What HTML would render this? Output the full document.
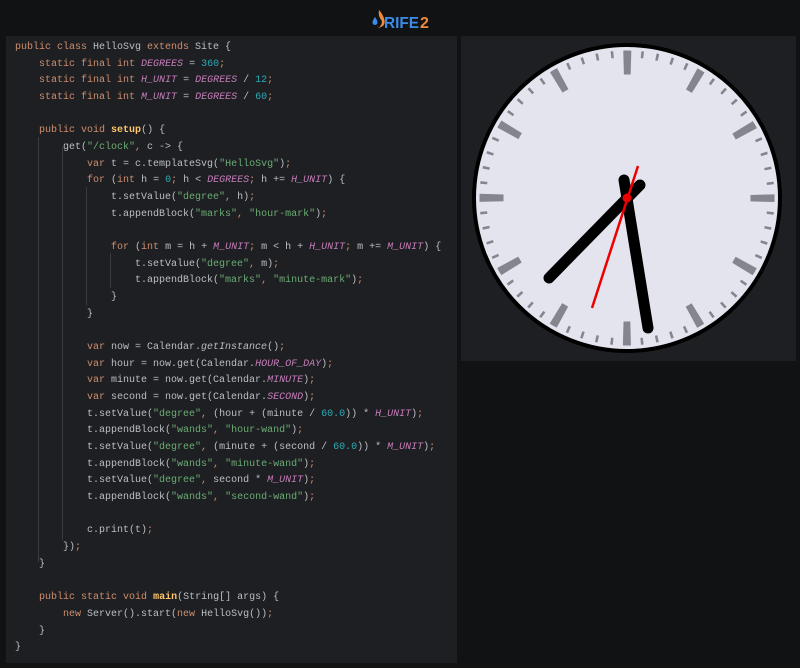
<!DOCTYPE html>
<html><head><meta charset="utf-8"><style>
body{margin:0;width:800px;height:668px;background:#111214;overflow:hidden;position:relative;font-family:"Liberation Sans",sans-serif}
.code{position:absolute;left:6px;top:36px;width:451px;height:627px;background:#1e1f22}
pre{margin:0;position:absolute;left:9px;top:4px;font-family:"Liberation Mono",monospace;font-size:10px;line-height:16.67px;color:#bcbec4}
.k{color:#cf8e6d}.i{color:#c77dbb;font-style:italic}.n{color:#2aacb8}.s{color:#6aab73}.m{color:#ffc66d;font-weight:bold}.it{font-style:italic}
.g{position:absolute;width:1px;background:#393b40}
.clock{position:absolute;left:461px;top:36px;width:335px;height:325px;background:#1e1f22}
.logo{position:absolute;left:372px;top:7px;height:24px}
</style></head><body>
<div class="logo"><svg width="70" height="24" viewBox="0 0 70 24">
<path d="M3 10 Q5.5 13.5 5.5 15.5 A2.5 2.5 0 0 1 0.5 15.5 Q0.5 13.5 3 10Z" fill="#3c8ce7"/>
<path d="M7 3 Q6 9 9 12.5 Q11.5 16 7 20.5 Q13.5 19.5 12.5 13.5 Q11.5 8 7 3Z M4.5 17 Q5.5 21.5 9 21.5 Q5.5 21 4.5 17Z" fill="#f08a3c"/>
<text x="12" y="21" font-family="Liberation Sans" font-weight="bold" font-size="16" fill="#3c8ce7" textLength="35" lengthAdjust="spacingAndGlyphs">RIFE</text>
<text x="48" y="21" font-family="Liberation Sans" font-weight="bold" font-size="16" fill="#f08a3c">2</text>
</svg></div>
<div class="code">
<div class="g" style="left:32px;top:101px;height:425px"></div>
<div class="g" style="left:56px;top:111px;height:393px"></div>
<div class="g" style="left:80px;top:151px;height:119px"></div>
<div class="g" style="left:104px;top:217px;height:35px"></div>
<pre><span class="k">public class</span> HelloSvg <span class="k">extends</span> Site {
    <span class="k">static final int</span> <span class="i">DEGREES</span> = <span class="n">360</span><span class="k">;</span>
    <span class="k">static final int</span> <span class="i">H_UNIT</span> = <span class="i">DEGREES</span> / <span class="n">12</span><span class="k">;</span>
    <span class="k">static final int</span> <span class="i">M_UNIT</span> = <span class="i">DEGREES</span> / <span class="n">60</span><span class="k">;</span>

    <span class="k">public void</span> <span class="m">setup</span>() {
        get(<span class="s">"/clock"</span><span class="k">,</span> c -> {
            <span class="k">var</span> t = c.templateSvg(<span class="s">"HelloSvg"</span>)<span class="k">;</span>
            <span class="k">for</span> (<span class="k">int</span> h = <span class="n">0</span><span class="k">;</span> h < <span class="i">DEGREES</span><span class="k">;</span> h += <span class="i">H_UNIT</span>) {
                t.setValue(<span class="s">"degree"</span><span class="k">,</span> h)<span class="k">;</span>
                t.appendBlock(<span class="s">"marks"</span><span class="k">,</span> <span class="s">"hour-mark"</span>)<span class="k">;</span>

                <span class="k">for</span> (<span class="k">int</span> m = h + <span class="i">M_UNIT</span><span class="k">;</span> m < h + <span class="i">H_UNIT</span><span class="k">;</span> m += <span class="i">M_UNIT</span>) {
                    t.setValue(<span class="s">"degree"</span><span class="k">,</span> m)<span class="k">;</span>
                    t.appendBlock(<span class="s">"marks"</span><span class="k">,</span> <span class="s">"minute-mark"</span>)<span class="k">;</span>
                }
            }

            <span class="k">var</span> now = Calendar.<span class="it">getInstance</span>()<span class="k">;</span>
            <span class="k">var</span> hour = now.get(Calendar.<span class="i">HOUR_OF_DAY</span>)<span class="k">;</span>
            <span class="k">var</span> minute = now.get(Calendar.<span class="i">MINUTE</span>)<span class="k">;</span>
            <span class="k">var</span> second = now.get(Calendar.<span class="i">SECOND</span>)<span class="k">;</span>
            t.setValue(<span class="s">"degree"</span><span class="k">,</span> (hour + (minute / <span class="n">60.0</span>)) * <span class="i">H_UNIT</span>)<span class="k">;</span>
            t.appendBlock(<span class="s">"wands"</span><span class="k">,</span> <span class="s">"hour-wand"</span>)<span class="k">;</span>
            t.setValue(<span class="s">"degree"</span><span class="k">,</span> (minute + (second / <span class="n">60.0</span>)) * <span class="i">M_UNIT</span>)<span class="k">;</span>
            t.appendBlock(<span class="s">"wands"</span><span class="k">,</span> <span class="s">"minute-wand"</span>)<span class="k">;</span>
            t.setValue(<span class="s">"degree"</span><span class="k">,</span> second * <span class="i">M_UNIT</span>)<span class="k">;</span>
            t.appendBlock(<span class="s">"wands"</span><span class="k">,</span> <span class="s">"second-wand"</span>)<span class="k">;</span>

            c.print(t)<span class="k">;</span>
        })<span class="k">;</span>
    }

    <span class="k">public static void</span> <span class="m">main</span>(String[] args) {
        <span class="k">new</span> Server().start(<span class="k">new</span> HelloSvg())<span class="k">;</span>
    }
}</pre>
</div>
<div class="clock"><svg width="335" height="325" viewBox="461 36 335 325">
<circle cx="627" cy="198" r="153" fill="#e4e4ee" stroke="#000" stroke-width="4"/>
<circle cx="627" cy="198" r="144" fill="none" stroke="#85858e" stroke-width="7" stroke-dasharray="2.6 12.48" stroke-dashoffset="1.3"/>
<circle cx="627" cy="198" r="135.5" fill="none" stroke="#85858e" stroke-width="24" stroke-dasharray="7.5 63.45" stroke-dashoffset="3.75"/>
<line x1="640" y1="185" x2="549" y2="278" stroke="#000" stroke-width="11" stroke-linecap="round"/>
<line x1="624" y1="180" x2="648" y2="328" stroke="#000" stroke-width="11" stroke-linecap="round"/>
<line x1="638" y1="166" x2="592" y2="308" stroke="#e00" stroke-width="2.5"/>
<circle cx="627" cy="198" r="4.5" fill="#e00"/>
</svg></div>
</body></html>
